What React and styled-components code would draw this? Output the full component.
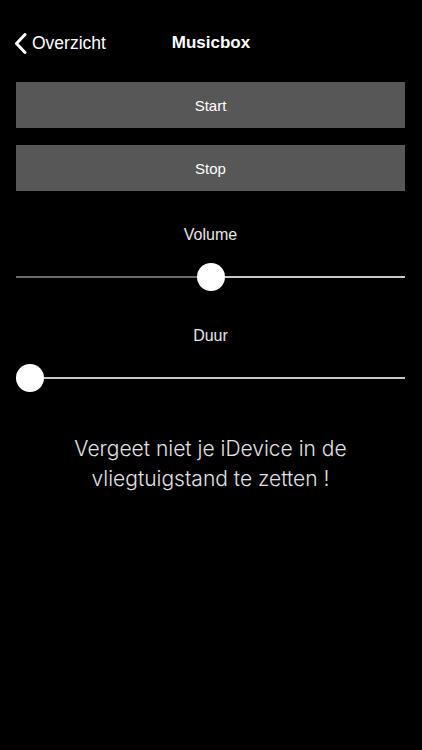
import React from "react";
import styled, { createGlobalStyle } from "styled-components";

const GlobalStyle = createGlobalStyle`
  html, body {
    margin: 0;
    padding: 0;
    background: #000;
  }
  body {
    font-family: "Liberation Sans", Arial, sans-serif;
    color: #fff;
  }
`;

const Page = styled.div`
  width: 422px;
  min-height: 750px;
  background: #000;
  box-sizing: border-box;
  padding: 0 17px 0 16px;
  display: flex;
  flex-direction: column;
`;

const NavBar = styled.div`
  display: grid;
  grid-template-columns: 1fr auto 1fr;
  align-items: center;
  height: 38px;
  margin: 24px -17px 0 -16px;
  padding: 0 14px;
`;

const BackLink = styled.div`
  display: flex;
  align-items: center;
  gap: 5px;
  font-size: 17.5px;
  color: #fff;
`;

const Title = styled.div`
  font-size: 17px;
  font-weight: bold;
  color: #fff;
`;

const ActionButton = styled.div`
  height: 46px;
  background: #575757;
  display: flex;
  align-items: center;
  justify-content: center;
  font-size: 15px;
  color: #fff;
  margin-top: ${(p) => p.$top}px;
`;

const Label = styled.div`
  margin-top: 34px;
  height: 20px;
  line-height: 20px;
  text-align: center;
  font-size: 16px;
  color: #e6e6e6;
`;

const SliderBox = styled.div`
  position: relative;
  height: 30px;
  margin-top: 17px;
  display: flex;
  align-items: center;
`;

const Track = styled.div`
  flex: 1;
  height: 2px;
  background: #c8c8c8;
  display: flex;
`;

const Fill = styled.div`
  height: 100%;
  background: #6a6a6a;
`;

const Thumb = styled.div`
  position: absolute;
  top: 1px;
  width: 28px;
  height: 28px;
  border-radius: 50%;
  background: #fff;
`;

const Message = styled.p`
  margin: 41px 0 0;
  text-align: center;
  font-size: 21px;
  line-height: 30px;
  font-weight: 300;
  color: #e2e2e2;
  font-family: Inter, "Liberation Sans", Arial, sans-serif;
`;

const Chevron = () => (
  <svg width="13" height="21" viewBox="0 0 13 21">
    <polyline
      points="11,1.5 2.5,10.5 11,19.5"
      fill="none"
      stroke="#fff"
      strokeWidth="3"
      strokeLinecap="round"
      strokeLinejoin="round"
    />
  </svg>
);

const Slider = ({ value }) => {
  // thumb loopt van 0 tot (breedte - 28px), zoals een iOS slider
  const pos = `calc(${value} * (100% - 28px))`;
  return (
    <SliderBox>
      <Track>
        <Fill style={{ width: `calc(${pos} + 14px)` }} />
      </Track>
      <Thumb style={{ left: pos }} />
    </SliderBox>
  );
};

const App = () => {
  return (
    <Page>
      <GlobalStyle />
      <NavBar>
        <BackLink>
          <Chevron />
          Overzicht
        </BackLink>
        <Title>Musicbox</Title>
        <div />
      </NavBar>

      <ActionButton $top={20}>Start</ActionButton>
      <ActionButton $top={17}>Stop</ActionButton>

      <Label>Volume</Label>
      <Slider value={0.5} />

      <Label>Duur</Label>
      <Slider value={0} />

      <Message>
        Vergeet niet je iDevice in de
        <br />
        vliegtuigstand te zetten !
      </Message>
    </Page>
  );
};

export default App;
